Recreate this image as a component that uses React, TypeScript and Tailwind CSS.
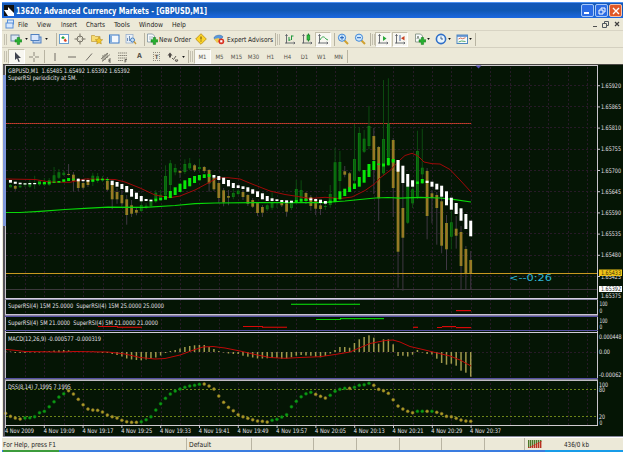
import type { ReactNode } from 'react';
import clsx from 'clsx';

const STEP = 4.845;
const barX = (i: number) => 5.6 + STEP * i;

// [index, high, top, bottom, low, up]
const CANDLES: [number, number, number, number, number, boolean][] = [
  [1, 184, 185, 187.3, 187.5, true], [2, 185, 186, 188.7, 190.7, false], [3, 185, 185.7, 187.3, 188, true],
  [4, 183, 183.5, 184.5, 187, true], [5, 180, 183.7, 186.7, 188, true], [6, 175.7, 183, 184, 189, true],
  [7, 180, 180.7, 184.7, 186, true], [8, 178, 182, 185, 186, true], [9, 178, 180, 185, 186, true],
  [10, 167, 175.3, 182.7, 183, true], [11, 169, 172.3, 177.7, 179, true], [12, 170, 172.7, 175, 176, true],
  [13, 164, 174, 175, 175.5, false], [14, 172, 174.7, 181, 191.7, false], [15, 178, 180, 188, 191.3, false],
  [16, 179, 183, 187.7, 189.7, false], [17, 178, 180, 185, 187, false], [18, 172.7, 175.7, 181.7, 186, true],
  [19, 173, 176.3, 178.7, 183, true], [20, 176, 179, 180, 182, true], [21, 177, 181, 189.7, 191, false],
  [22, 181, 183, 199.3, 209.3, false], [23, 188, 192, 199.3, 203.7, false], [24, 190, 195, 203.3, 206.7, false],
  [25, 195, 199.3, 215, 224.7, false], [26, 200, 205.3, 213.7, 217, false], [27, 207, 210, 212.7, 215.3, false],
  [28, 200, 205, 211, 212, true], [29, 203, 205.7, 207.7, 209, true], [30, 199, 201, 206, 207, true],
  [31, 190, 192.7, 199.3, 203, true], [32, 190, 194.7, 200.7, 201, true], [33, 165.3, 176, 195.3, 199, true],
  [34, 160, 163.3, 185, 191, true], [35, 164, 168, 172.3, 175.3, true], [36, 170, 171, 172.7, 178, false],
  [37, 159.3, 164, 172, 174, true], [38, 158, 163.3, 168.3, 170, true], [39, 164, 165.3, 170.3, 172, false],
  [40, 158.7, 167, 169, 171, true], [41, 166, 167, 171, 173, false], [42, 169, 170, 183.3, 191.7, false],
  [43, 175, 178, 189.3, 191, false], [44, 180, 183, 198, 202.7, false], [45, 188, 190.3, 202.3, 206.3, false],
  [46, 190, 196, 197.7, 205.3, false], [47, 188.3, 193, 197, 199.3, true], [48, 189, 190.7, 194, 195, true],
  [49, 190, 192, 197, 200, false], [50, 194, 195, 203.7, 206, false], [51, 198, 200, 206.7, 208, false],
  [52, 202, 203, 213, 216, false], [53, 205, 207, 212.7, 217, false], [54, 204, 205.3, 209.3, 211, true],
  [55, 192.3, 202.7, 207.7, 210, true], [56, 200, 202, 203, 208, true], [57, 200, 202, 205.3, 207, false],
  [58, 202, 203.3, 211.7, 216.7, false], [59, 201, 203.3, 208, 210, true], [60, 180, 189, 201, 204, true],
  [61, 180.3, 190, 199, 203, true], [62, 192, 193, 201, 204, false], [63, 195, 197, 206, 210.7, false],
  [64, 198, 200, 208.7, 215, false], [65, 202, 205.3, 209, 215, false], [66, 204, 206, 207, 210, true],
  [67, 185, 194, 205, 207.7, true], [68, 147.7, 162.3, 201, 203, true], [69, 151, 162, 181, 200, true],
  [70, 166, 171.3, 174.7, 177.3, false], [71, 172, 173.3, 188, 192, false], [72, 124, 159, 180.7, 184, true],
  [73, 127.3, 133, 170.7, 172, true], [74, 130, 138.7, 151.7, 153, true], [75, 106, 126, 146, 149.3, true],
  [76, 128, 136, 160, 194, false], [77, 146, 147, 198.3, 221, false], [78, 80, 139, 173.3, 175, true],
  [79, 78.3, 123.7, 157.7, 166, true], [80, 138, 140, 188, 217, false], [81, 160, 160, 251.7, 287.7, false],
  [82, 166, 208, 237.7, 290.7, false], [83, 180, 186.7, 222.7, 224, true], [84, 186, 189.3, 203.3, 208, true],
  [85, 130.7, 151, 196.7, 199, true], [86, 128.7, 167.7, 174.3, 184, true], [87, 168, 171, 216, 239.3, false],
  [88, 190, 193.3, 198, 223.3, false], [89, 192, 195, 208, 244.7, false], [90, 196, 201.3, 245.7, 253.3, false],
  [91, 215, 223, 249.3, 270, false], [92, 211, 222.3, 236.7, 249.3, true], [93, 216, 228.7, 235.7, 248.7, false],
  [94, 226, 232, 266, 289.3, false], [95, 246, 249, 273.3, 289.3, false], [96, 251, 260, 273.3, 289.3, false],
];

// trend blocks for bars 1..96: [top, bottom]
const BLOCKS: [number, number][] = [
  [180, 182.7], [181.7, 183.8], [182.7, 184.3], [183.3, 184.5], [183, 184.3], [183, 184.2], [182.3, 183.8],
  [182, 184], [181.7, 183.7], [181.7, 182.8], [181, 182.7], [179.3, 181.8], [178, 181], [178.7, 179.8],
  [178.7, 181.3], [179.7, 181.2], [180, 181.7], [179.3, 181.7], [178.7, 180.7], [178.7, 180.3], [179, 180.3],
  [180.7, 185], [182, 186.7], [184, 189], [186, 192.3], [189, 196.7], [192.7, 199], [196, 201.3], [199, 201],
  [199.7, 201.3], [198.7, 201.3], [198, 200], [196, 199.7], [191, 198], [187.3, 195], [183.7, 192],
  [180.3, 189], [178, 186.3], [176, 183], [175, 180.3], [174.3, 178], [174, 177], [175, 177.7], [176, 180],
  [177.7, 184], [180, 186.3], [183, 188], [185.3, 188], [186.3, 189], [187.3, 191.7], [189.3, 193.7],
  [191.3, 197], [193.3, 199.3], [196, 201], [198.3, 201], [199.3, 201], [200, 202], [200.3, 202.7],
  [200.7, 202.7], [200, 202], [199, 201.7], [198.7, 201], [198.3, 200.3], [199, 201], [199.7, 203],
  [201, 203.7], [200.7, 203], [198, 202], [191.3, 199.3], [188.7, 196], [187.3, 192], [183.5, 189],
  [177, 186.7], [170, 182.7], [164, 177], [161, 170], [163.5, 165], [163.5, 166.5], [158, 165.3],
  [159, 162.5], [160, 171.7], [165.7, 183], [174, 186.7], [180.3, 186.7], [181.5, 184], [179, 183.3],
  [180.7, 183], [181.7, 186.7], [183.7, 189.5], [185.7, 196.7], [191.3, 205.3], [197.7, 209.7],
  [203, 214], [208.3, 220.7], [214, 229], [220.7, 236.3],
];

const isGreenBlock = (i: number) =>
  (i >= 7 && i <= 14) || (i >= 18 && i <= 21) || (i >= 31 && i <= 42) ||
  (i >= 60 && i <= 62) || (i >= 67 && i <= 80) || i === 85 || i === 86;

const MACD = [
  -1, -0.5, 1, 1, 1, 0.5, 0.5, 0.5, -1, -1, -1.5, -1.7, -2, -1.7, -1, -1, -0.7, -0.5, -0.5, 0.5, 1,
  1, 2, 3, 4.5, 6.5, 7.5, 8, 8.3, 7.5, 6.5, 5.5, 3.5, 1, -1, -2, -3.5, -5, -6, -6.7, -7, -7, -5, -3, -1,
  0.5, 1.5, 2, 2, 3.7, 4.7, 5.5, 6.5, 6.5, 6.3, 6, 6, 6.7, 6.5, 5.3, 3.7, 3, 3.5, 3.7, 4.7, 5.3, 4, 1.5,
  -2, -5, -5, -4.3, -9, -12.7, -15, -16.7, -14.3, -8.3, -12.7, -12.7, -7.7, 4, 3.7, 4.5, 2.7, -2, 0.5,
  2, 2.5, 6.7, 11, 12.7, 11.7, 13.7, 18.7, 20.7, 24.7,
];

const DSS = [
  413.3, 416.3, 418, 419, 418, 417.7, 416.7, 412.7, 411.3, 406.7, 401.7, 397, 393.7, 390.7, 394, 399.3,
  404.7, 409, 410, 410.3, 412, 415, 416.7, 418, 420.3, 421.7, 422.3, 422.3, 421.7, 419.7, 416.7, 410,
  403.7, 398.3, 394, 391, 389, 387.3, 386, 385.3, 384.3, 384, 386, 389, 396, 402.3, 407.3, 410.7, 414.7,
  416.7, 418.3, 419.7, 421, 421.3, 422, 420.3, 419.3, 417, 414.7, 406.7, 401.3, 396.7, 393.7, 392.3,
  394.3, 396.3, 398, 395.3, 391.3, 389.3, 388.3, 388.3, 387.3, 385.3, 384.7, 383.3, 385.3, 389.3, 390.7,
  393.3, 399.7, 406, 409, 411.3, 412.7, 411.3, 411.3, 411.3, 411.3, 412.3, 413.7, 416.3, 416.7, 418.3,
  420, 421, 421.3,
];

const isGreenDot = (i: number) =>
  (i >= 4 && i <= 12) || (i >= 28 && i <= 40) || (i >= 55 && i <= 63) ||
  (i >= 67 && i <= 75 && i !== 71) || i === 85 || i === 86 || i === 88;

const PRICES = ['1.65920', '1.65865', '1.65810', '1.65755', '1.65700', '1.65645', '1.65590', '1.65535', '1.65480', '1.65425'];
const TIMES = ['2009', '19:09', '19:17', '19:25', '19:33', '19:41', '19:49', '19:57', '20:05', '20:13', '20:21', '20:29', '20:37'];
const PERIODS = ['M5', 'M15', 'M30', 'H1', 'H4', 'D1', 'W1', 'MN'];

const Label = ({ x, y, w, fill = '#e4e0e8', children }: { x: number; y: number; w: number; fill?: string; children: string }) => (
  <text x={x} y={y} textLength={w} lengthAdjust="spacingAndGlyphs" fill={fill} className="whitespace-pre">
    {children}
  </text>
);

const Chart = () => (
  <svg
    viewBox="3 64 620 373"
    className="block h-[373px] w-[620px] font-['DejaVu_Sans_Condensed','DejaVu_Sans',sans-serif] text-[6.2px]"
  >
    <rect x="3" y="64" width="620" height="373" fill="#051505" />
    <rect x="3" y="64" width="620" height="1" fill="#4a4844" />
    <rect x="3" y="65" width="2" height="372" fill="#55535a" />

    {/* Grid */}
    <g stroke="#271a27" strokeWidth="1" strokeDasharray="2 2" shapeRendering="crispEdges">
      {Array.from({ length: 30 }, (_, i) => (
        <line key={i} x1={25.5 + i * 19.38} x2={25.5 + i * 19.38} y1="67" y2="425" />
      ))}
      {PRICES.map((p, i) => (
        <line key={p} x1="6" x2="597" y1={85.5 + i * 21.2} y2={85.5 + i * 21.2} />
      ))}
      <line x1="6" x2="597" y1="352.5" y2="352.5" />
    </g>
    <line x1="6" x2="471" y1="123.5" y2="123.5" stroke="#d83820" strokeDasharray="1 1" shapeRendering="crispEdges" />
    <line x1="6" x2="471" y1="123.5" y2="123.5" stroke="#8a3838" strokeDasharray="1 1" strokeDashoffset="1" shapeRendering="crispEdges" />
    <line x1="6" x2="597" y1="289.5" y2="289.5" stroke="#3c383c" />

    {/* Candles */}
    {CANDLES.map(([i, high, top, bottom, low, up]) => (
      <g key={i}>
        <rect x={barX(i) - 0.5} y={high} width="1" height={low - high} fill={up ? '#0c4a10' : '#403844'} />
        <rect x={barX(i) - 1.4} y={top} width="2.8" height={bottom - top} fill={up ? '#0c7c10' : '#8a8420'} />
        <rect x={barX(i) - 0.4} y={top + 0.6} width="0.9" height={Math.max(0, bottom - top - 1.2)} fill={up ? '#0a5c0e' : '#a86c30'} />
      </g>
    ))}

    <polyline
      fill="none"
      stroke="#08d808"
      strokeWidth="1.2"
      points="6,212.5 20,212.5 40,211.3 65,209.5 85,208.3 108,207.2 145,207.4 175,205.5 195,203.7 215,203 260,202.6 300,202.6 322,202.6 345,201 360,199.5 375,198 388,197.5 400,198.2 420,197.4 440,198 455,199.7 471,202"
    />
    <polyline
      fill="none"
      stroke="#a00808"
      points="6,179 35,179.5 50,182 70,182.3 85,179 115,179.5 125,182 140,188 155,195 170,197.7 180,196 195,190 209,182.5 217,178 228,177.7 240,179 252,184 270,191 285,194.5 298,196.5 310,198.5 325,197.3 340,198.5 352,197 365,190.5 375,183.5 380,178 390,170.5 400,160 405,155.5 412,153.3 418,156 424,162 432,163.7 440,164 450,169.5 460,180 471,192"
    />
    {BLOCKS.map(([top, bottom], n) => (
      <rect
        key={n}
        x={barX(n + 1) - 1.5}
        y={top}
        width="3"
        height={bottom - top}
        fill={isGreenBlock(n + 1) ? '#08e808' : '#ffffff'}
      />
    ))}
    <rect x="6" y="273" width="592" height="1" fill="#c89820" />
    <text x="509" y="281" textLength="43" lengthAdjust="spacingAndGlyphs" fill="#30b8d8" className="text-[9.5px]">
      {'<--0:26'}
    </text>

    {/* Super RSI panes */}
    <g fill="#08c808">
      <rect x="291" y="303.7" width="69" height="1.2" />
      <rect x="316" y="319" width="25" height="1" />
      <rect x="340" y="318" width="44" height="1.2" />
    </g>
    <g fill="#d80808">
      <rect x="456" y="310" width="15" height="1.2" />
      <rect x="98" y="326" width="20" height="1" />
      <rect x="117" y="326.7" width="25" height="1.1" />
      <rect x="243" y="326" width="20" height="1" />
      <rect x="262" y="326.7" width="25" height="1.1" />
      <rect x="413" y="326.7" width="5" height="1.2" />
      <rect x="437" y="327" width="5" height="1" />
      <rect x="442" y="326" width="14" height="1.2" />
      <rect x="456" y="327" width="15" height="1.2" />
    </g>

    {/* MACD */}
    {MACD.map((v, i) => (
      <rect key={i} x={barX(i) - 0.75} y={v > 0 ? 352 : 352 + v} width="1.5" height={Math.abs(v)} fill="#a09a4c" />
    ))}
    <polyline
      fill="none"
      stroke="#c00808"
      points="6,349.5 15,350.3 25,351.5 60,352 75,351.5 108,352 125,354 140,357.5 155,359 165,358.5 180,355 195,349.5 203,347 213,346.5 225,348 240,351 255,354.5 270,357.5 285,358.3 300,357.5 320,356.7 335,354.5 350,352 358,348.5 370,343.5 385,340.5 393,340 400,342 410,346.5 425,350 435,352.5 450,356 460,360 471,366"
    />

    {/* DSS */}
    <g stroke="#6c8418" strokeDasharray="2 2" shapeRendering="crispEdges">
      <line x1="6" x2="597" y1="389.5" y2="389.5" />
      <line x1="6" x2="597" y1="416.5" y2="416.5" />
    </g>
    {DSS.map((y, i) => (
      <circle
        key={i}
        cx={barX(i)}
        cy={y}
        r="1.5"
        fill={isGreenDot(i) ? '#0c9c14' : '#aaa020'}
        stroke={isGreenDot(i) ? '#087010' : '#806430'}
        strokeWidth="0.5"
      />
    ))}

    {/* Pane frames */}
    <g shapeRendering="crispEdges">
      <rect x="5" y="65" width="593" height="1" fill="#d0ccd0" />
      <rect x="5" y="65" width="1" height="361" fill="#c8c4cc" />
      <rect x="597" y="65" width="1" height="361" fill="#c8c4cc" />
      <rect x="5" y="298" width="593" height="1" fill="#d8d0e4" />
      <rect x="5" y="299" width="593" height="1" fill="#8888a4" />
      <rect x="5" y="314" width="593" height="1" fill="#c8c4d4" />
      <rect x="5" y="315" width="593" height="1" fill="#8880a0" />
      <rect x="5" y="316" width="593" height="1" fill="#5450a0" />
      <rect x="5" y="330" width="593" height="1" fill="#5450a0" />
      <rect x="5" y="332" width="593" height="1" fill="#d0ccd8" />
      <rect x="5" y="378" width="593" height="1" fill="#5450a0" />
      <rect x="5" y="379" width="593" height="1" fill="#808090" />
      <rect x="5" y="380" width="593" height="1" fill="#c0bcc4" />
      <rect x="5" y="425" width="593" height="1" fill="#d0ccd0" />
      <rect x="3" y="436" width="620" height="1" fill="#88889c" />
      <rect x="3" y="75" width="3" height="151" fill="#8098dc" />
    </g>
    <path d="M475.500 65.500h6l-3 3z" fill="#5450b0" />

    {/* Captions */}
    <Label x={8} y={73.3} w={122}>GBPUSD,M1  1.65485 1.65492 1.65392 1.65392</Label>
    <Label x={8} y={79.5} w={69}>SuperRSI periodicity at 5M.</Label>
    <Label x={8} y={308} w={156}>SuperRSI(4) 15M 25.0000  SuperRSI(4) 15M 25.0000 25.0000</Label>
    <Label x={8} y={324.5} w={150}>SuperRSI(4) 5M 21.0000  SuperRSI(4) 5M 21.0000 21.0000</Label>
    <Label x={8} y={341} w={93}>MACD(12,26,9) -0.000577 -0.000319</Label>
    <Label x={8} y={388.7} w={63}>DSS(8,14) 7.1995 7.1995</Label>

    {/* Price scale */}
    {PRICES.map((p, i) => (
      <g key={p}>
        <rect x="598" y={85.2 + i * 21.2} width="2" height="1" fill="#c8c4cc" />
        <Label x={601} y={87.7 + i * 21.2} w={20}>{p}</Label>
      </g>
    ))}
    <rect x="599" y="269.500" width="23" height="6.500" fill="#f0c418" />
    <Label x={601} y={275.2} w={20} fill="#3c3008">1.65433</Label>
    <rect x="599" y="286" width="23" height="6" fill="#ffffff" />
    <Label x={601} y={291.3} w={20} fill="#202020">1.65392</Label>
    <Label x={601} y={298} w={20}>1.65375</Label>
    <Label x={599.5} y={306.3} w={8}>100</Label>
    <Label x={599.5} y={313} w={2.7}>0</Label>
    <Label x={599.5} y={322.7} w={8}>100</Label>
    <Label x={599.5} y={329.3} w={2.7}>0</Label>
    <Label x={599} y={339} w={22.5}>0.000448</Label>
    <Label x={599} y={354.3} w={11}>0.00</Label>
    <Label x={599} y={377} w={22.5}>-0.00062</Label>
    <Label x={599} y={386.7} w={9}>100</Label>
    <Label x={599} y={391.7} w={6}>80</Label>
    <Label x={599} y={418.5} w={6}>20</Label>
    <Label x={599.5} y={424.5} w={2.7}>0</Label>

    {/* Time scale */}
    {TIMES.map((t, i) => (
      <g key={t}>
        <rect x={5 + i * 38.8} y="426" width="1" height="2" fill="#c8c4cc" />
        <Label x={5 + i * 38.76} y={433.3} w={i ? 31 : 29}>{`4 Nov ${t}`}</Label>
      </g>
    ))}
  </svg>
);

// Single line of text squeezed to the width of its box
const Fit = ({ w, className, children }: { w: number; className?: string; children: string }) => (
  <svg viewBox={`0 0 ${w} 12`} width={w} height="12" className={clsx('shrink-0 overflow-visible', className)}>
    <text x="0" y="8.7" textLength={w} lengthAdjust="spacingAndGlyphs" fill="currentColor">{children}</text>
  </svg>
);

const Slot = ({ className, pressed, children }: { className: string; pressed?: boolean; children?: ReactNode }) => (
  <div
    className={clsx(
      'flex h-[15px] shrink-0 items-center justify-center',
      pressed && 'border border-[#c4c0ac] border-r-white border-b-white bg-[#f8f7f1]',
      className,
    )}
  >
    {children}
  </div>
);

const Sep = ({ className }: { className: string }) => (
  <div className={clsx('flex h-[13px] shrink-0 justify-end border-r border-[#b8b4a2]', className)} />
);

const Handle = () => <div className="mx-px h-[11px] w-[3px] shrink-0 border-x border-[#c4c0b0]" />;

const Drop = ({ className }: { className: string }) => (
  <Slot className={className}>
    <svg viewBox="0 0 4 3" className="h-[2px] w-[3px]"><path d="M0 0h4L2 3z" fill="#111" /></svg>
  </Slot>
);

const Ico = ({ children }: { children: ReactNode }) => (
  <svg viewBox="0 0 12 12" className="h-3 w-3 shrink-0" fill="none">{children}</svg>
);

const Plus = () => <path d="M7.200 4.500h2.400v2.200h2.200v2.400H9.600v2.300H7.200V9.100H5V6.700h2.200z" fill="#28b030" stroke="#0c7814" strokeWidth=".5" />;
const Axes = () => <path d="M2.500 1.500v8.500H11M1.500 3l1-1.500 1 1.500M9.700 9l1.300 1-1.300 1M1 10h2" stroke="#5c6068" strokeWidth=".9" />;

const TopToolbar = () => (
  <div className="flex h-[17px] items-center border-b border-[#d4d0c0] pl-px text-[7px]">
    <Handle />
    <Slot className="w-4"><Ico><rect x="1" y="2" width="8" height="6" fill="#dce8f4" stroke="#6c88a8" /><Plus /></Ico></Slot>
    <Drop className="w-[4px]" />
    <Slot className="w-[15px]"><Ico><rect x="3" y="4" width="8" height="6" fill="#b8d0f0" stroke="#5080c0" /><rect x="1" y="1.500" width="8" height="6" fill="#dce8fc" stroke="#5080c0" /></Ico></Slot>
    <Drop className="w-[6px]" />
    <Sep className="w-[8px]" />
    <Slot className="w-[13px]"><Ico><rect x="1.500" y="1.500" width="9" height="9" fill="#fff" stroke="#6ca0d0" /><path d="M3 5l2-2 2 2-2 1z" fill="#20a040" /><path d="M5.500 7l2-1.500L9 8 7 9z" fill="#e04820" /></Ico></Slot>
    <Slot className="w-5"><Ico><circle cx="6" cy="6" r="3" stroke="#787468" /><path d="M6 .500v4M6 7.500v4M.500 6h4M7.500 6h4" stroke="#787468" /></Ico></Slot>
    <Slot className="w-[13px]"><Ico><path d="M.500 2.500h3l1 1H9v5H.500z" fill="#f8dc70" stroke="#b89028" strokeWidth=".6" /><path d="M8 4l1.200 2.400 2.500.300-1.900 1.700.500 2.600L8 9.800 5.700 11l.500-2.600-1.900-1.700 2.500-.300z" fill="#f4c828" stroke="#a88018" strokeWidth=".5" /></Ico></Slot>
    <Slot className="w-[22px]"><Ico><rect x="1.500" y="2" width="9.500" height="8" fill="#f4f8fc" stroke="#3878c8" /><rect x="2" y="2.500" width="2" height="7" fill="#80acdc" /></Ico></Slot>
    <Slot className="w-[12px]"><Ico><rect x="1" y="1.500" width="7" height="8.500" fill="#e8f0f8" stroke="#90a8c8" strokeWidth=".7" /><path d="M2.500 8V5M4.500 8V3M6.500 8V5" stroke="#7090b8" /><circle cx="7.500" cy="7" r="2" fill="#c8e0f4" stroke="#4880c0" /><path d="M9 8.500l2 2.500" stroke="#c89838" strokeWidth="1.300" /></Ico></Slot>
    <Sep className="w-[8px]" />
    <Slot className="w-[13px]"><Ico><path d="M1.500 1h5l2 2v6h-7z" fill="#f8fafc" stroke="#708898" strokeWidth=".7" /><path d="M3 4h4M3 6h3" stroke="#8ca0b0" strokeWidth=".7" /><Plus /></Ico></Slot>
    <Fit w={32} className="mr-[3px] ml-px">New Order</Fit>
    <Slot className="w-[14px]"><Ico><path d="M6 .700L11.300 6 6 11.300.700 6z" fill="#fcd428" stroke="#b88c10" strokeWidth=".8" /><path d="M6 3.500v3M6 7.500v1" stroke="#604808" /></Ico></Slot>
    <Slot className="ml-[4px] w-[13px]"><Ico><path d="M1 5c0-3 8-4 9-1L7 7H2z" fill="#5898dc" stroke="#2860a8" strokeWidth=".5" /><path d="M1 6l5-1 1 3-3 2z" fill="#f0c850" /><circle cx="8.300" cy="8.300" r="2.900" fill="#d83020" /><rect x="7.200" y="7.200" width="2.200" height="2.200" fill="#fff" /></Ico></Slot>
    <Fit w={46} className="mr-[2px] ml-[2px]">Expert Advisors</Fit>
    <Sep className="w-px" />
    <Handle />
    <Slot className="w-[17px]"><Ico><Axes /><path d="M5 8V4M7.500 7V2.500M7.500 3h2M5 7h1.500" stroke="#20983c" /></Ico></Slot>
    <Slot className="w-[17px]"><Ico><Axes /><rect x="6" y="2" width="2.800" height="5" fill="#30c040" stroke="#107820" strokeWidth=".6" /><path d="M7.400.500V2M7.400 7v1.500" stroke="#107820" /></Ico></Slot>
    <Slot pressed className="w-4"><Ico><Axes /><path d="M3 7c2-4 4-4 6-1l2 1" stroke="#38a850" /></Ico></Slot>
    <Sep className="w-[4px]" />
    <Slot className="w-4"><Ico><path d="M7 7l4 4" stroke="#d0a030" strokeWidth="2" /><circle cx="5" cy="4.700" r="3.600" fill="#d0e8fc" stroke="#4088d8" /><path d="M3 4.700h4M5 2.700v4" stroke="#2060b8" /></Ico></Slot>
    <Slot className="w-[18px]"><Ico><path d="M7 7l4 4" stroke="#d0a030" strokeWidth="2" /><circle cx="5" cy="4.700" r="3.600" fill="#d0e8fc" stroke="#4088d8" /><path d="M3 4.700h4" stroke="#2060b8" /></Ico></Slot>
    <Sep className="w-[2px]" />
    <Handle />
    <Slot pressed className="-ml-px w-4"><Ico><Axes /><path d="M6 3l3.500 2.500L6 8z" fill="#28a838" /></Ico></Slot>
    <Slot pressed className="ml-px w-4"><Ico><Axes /><path d="M6 2v6" stroke="#4868a0" /><path d="M10.500 3L7 5.200l3.500 2.300z" fill="#c84020" /></Ico></Slot>
    <Slot className="ml-[4px] w-[15px]"><Ico><path d="M1.500 1h5l2 2v6h-7z" fill="#f8fafc" stroke="#788878" strokeWidth=".8" /><path d="M3 6l1-3 1 3" stroke="#607060" strokeWidth=".7" /><Plus /></Ico></Slot>
    <Drop className="w-[3px]" />
    <Slot className="ml-[3px] w-[15px]"><Ico><circle cx="6" cy="6" r="4.600" fill="#e8f4fc" stroke="#3070c8" strokeWidth="1.600" /><path d="M6 3.500V6h2" stroke="#305080" strokeWidth=".9" /></Ico></Slot>
    <Drop className="w-[3px]" />
    <Slot className="ml-[3px] w-[15px]"><Ico><rect x="1" y="2" width="10.500" height="8.500" fill="#f8fafc" stroke="#5088c0" /><path d="M1 3h10.500" stroke="#4880c8" strokeWidth="1.500" /><path d="M2.500 6l2-1 2 .700 3-1" stroke="#c05030" strokeWidth=".8" /><path d="M2.500 9l3-1 4 .500" stroke="#309848" strokeWidth=".8" /></Ico></Slot>
    <Drop className="w-[3px]" />
    <Sep className="w-[4px]" />
  </div>
);

const LineToolbar = () => (
  <div className="flex h-[17px] items-center pl-px text-[6px] text-[#55534c]">
    <Handle />
    <Slot pressed className="w-[17px]"><Ico><path d="M4 1v8l2-1.800L7.500 11l1.300-.600L7.300 7H10z" fill="#404450" /></Ico></Slot>
    <Slot className="w-[18px]"><Ico><path d="M6 1v4M6 7v4M1 6h4M7 6h4" stroke="#8c887c" /></Ico></Slot>
    <Sep className="w-[2px]" />
    <Slot className="w-[19px]"><Ico><path d="M6 2v8" stroke="#706c64" /></Ico></Slot>
    <Slot className="w-[16px]"><Ico><path d="M2 6h8" stroke="#706c64" /></Ico></Slot>
    <Slot className="w-[17px]"><Ico><path d="M3 9.500l6-7" stroke="#706c64" /></Ico></Slot>
    <Slot className="w-[17px]"><Ico><path d="M1 8l7-6M2 10.500l8-7M3 4v6M5 3v6M7 2v5" stroke="#68645c" strokeWidth=".8" /><path d="M11 8H9v3h2M9 9.500h1.500" stroke="#504c48" strokeWidth=".8" /></Ico></Slot>
    <Slot className="w-[17px]"><Ico><path d="M1 2h9M1 4.500h9M1 7h9M1 9.500h5" stroke="#807c70" strokeWidth=".9" strokeDasharray="1.500 .500" /><path d="M8 11.500v-3h2M8 10h1.500" stroke="#504c48" strokeWidth=".8" /></Ico></Slot>
    <Slot className="w-[17px] text-[7px] font-bold">A</Slot>
    <Slot className="w-[17px]"><span className="border border-dotted border-[#908c80] px-px text-[6px] leading-[7px] font-bold">T</span></Slot>
    <Slot className="w-[15px]"><Ico><path d="M3 1.500l2.500 3h-1.500v2H2v-2H.500z" fill="#504c48" /><path d="M5 7l1.500 1.500L9 5M8 9h3l-1.500 2z" stroke="#605c54" /></Ico></Slot>
    <Drop className="w-[6px]" />
    <Sep className="w-[3px]" />
    <Handle />
    <Slot pressed className="w-[17px]">M1</Slot>
    {PERIODS.map((p) => (
      <Slot key={p} className="w-[17px]">{p}</Slot>
    ))}
    <Sep className="w-px" />
  </div>
);

const App = () => (
  <div className="h-[452px] w-[625px] overflow-hidden bg-white pt-[2px] pl-[2px] font-['DejaVu_Sans_Condensed','DejaVu_Sans',sans-serif] text-[7px] leading-none text-[#1c1c1c]">
    <div className="flex w-[621px] flex-col bg-[#ece9d8]">
      <header className="flex h-[16px] items-center border-t border-[#4c90f0] bg-linear-to-b from-[#1458b8] via-[#1058b4] to-[#1c68e0] pl-[2px] text-white">
        <svg viewBox="0 0 10 11" className="h-[11px] w-[10px]">
          <rect width="10" height="11" fill="#101010" />
          <path d="M0 5h4V2l6 6v3H4z" fill="#fff" />
        </svg>
        <h1 className="ml-[2px] flex-1 text-[8.5px] font-bold">
          <Fit w={191}>13620: Advanced Currency Markets - [GBPUSD,M1]</Fit>
        </h1>
        <div className="mr-px flex gap-px">
          <div className="flex h-[13px] w-[13px] items-end rounded-xs border border-[#a8c8f8] bg-[#2c6ce4] p-[2px]"><i className="h-[2px] w-[5px] bg-white" /></div>
          <div className="flex h-[13px] w-[13px] items-center justify-center rounded-xs border border-[#a8c8f8] bg-[#2c6ce4]">
            <svg viewBox="0 0 8 8" className="h-2 w-2" fill="none" stroke="#fff"><path d="M3 2.500V1h4v4H5.500M1 3h4v4H1z" /></svg>
          </div>
          <div className="flex h-[13px] w-[13px] items-center justify-center rounded-xs border border-[#f4c0a8] bg-[#e05828]">
            <svg viewBox="0 0 8 8" className="h-2 w-2" stroke="#fff" strokeWidth="1.400"><path d="M1 1l6 6M7 1L1 7" /></svg>
          </div>
        </div>
      </header>

      <nav className="flex h-[13px] items-center border-b border-[#d8d4c4] pl-[3px]">
        <svg viewBox="0 0 10 10" className="h-[10px] w-[10px]" fill="#d8e8fc" stroke="#5890d8">
          <rect x="2.500" y="1" width="6" height="4" /><rect x="1" y="4" width="7" height="5" />
        </svg>
        <Fit w={10} className="ml-[3px]">File</Fit>
        <Fit w={14} className="ml-[9px]">View</Fit>
        <Fit w={16} className="ml-[10px]">Insert</Fit>
        <Fit w={19} className="ml-[9px]">Charts</Fit>
        <Fit w={16} className="ml-[9px]">Tools</Fit>
        <Fit w={24} className="ml-[9px]">Window</Fit>
        <Fit w={14} className="ml-[9px]">Help</Fit>
        <div className="mr-[3px] ml-auto flex items-center gap-[5px]">
          <i className="mt-[4px] h-px w-[4px] bg-[#505050]" />
          <svg viewBox="0 0 7 7" className="h-[7px] w-[7px]" fill="none" stroke="#505860"><path d="M2.500 2V.500h4v4H5M.500 2.500h4v4h-4z" /></svg>
          <svg viewBox="0 0 6 6" className="h-[6px] w-[6px]" stroke="#404040" strokeWidth="1.200"><path d="M1 1l4 4M5 1L1 5" /></svg>
        </div>
      </nav>

      <TopToolbar />
      <LineToolbar />

      <main className="-mt-px pl-px">
        <Chart />
      </main>

      <footer className="flex h-[13px] items-center border-t border-white pl-px">
        <Fit w={53} className="mr-[130px]">For Help, press F1</Fit>
        <Sep className="w-px" />
        <Fit w={22} className="mr-[39px] ml-[2px]">Default</Fit>
        <Sep className="w-[2px]" />
        <Sep className="w-[62px]" />
        <Sep className="w-[43px]" />
        <Sep className="w-[43px]" />
        <Sep className="w-[42px]" />
        <Sep className="w-[43px]" />
        <Sep className="w-[40px]" />
        <svg viewBox="0 0 14 8" className="ml-[3px] h-2 w-[14px]">
          {[0, 2, 4, 6, 8, 10, 12].map((x, n) => (
            <g key={x}>
              <rect x={x} y="0" width="1.400" height={8 - n} fill="#4c7828" />
              <rect x={x} y={7 - n} width="1.400" height={n + 1} fill="#b83020" />
            </g>
          ))}
        </svg>
        <Fit w={25} className="ml-[22px]">436/0 kb</Fit>
      </footer>
      <div className="flex h-[3px] bg-[#3a7ce0]">
        <div className="ml-px w-[56px] bg-[#3c9c3c]" />
        <div className="ml-auto w-[78px] bg-[#189ce8]" />
      </div>
    </div>
  </div>
);

export default App;
